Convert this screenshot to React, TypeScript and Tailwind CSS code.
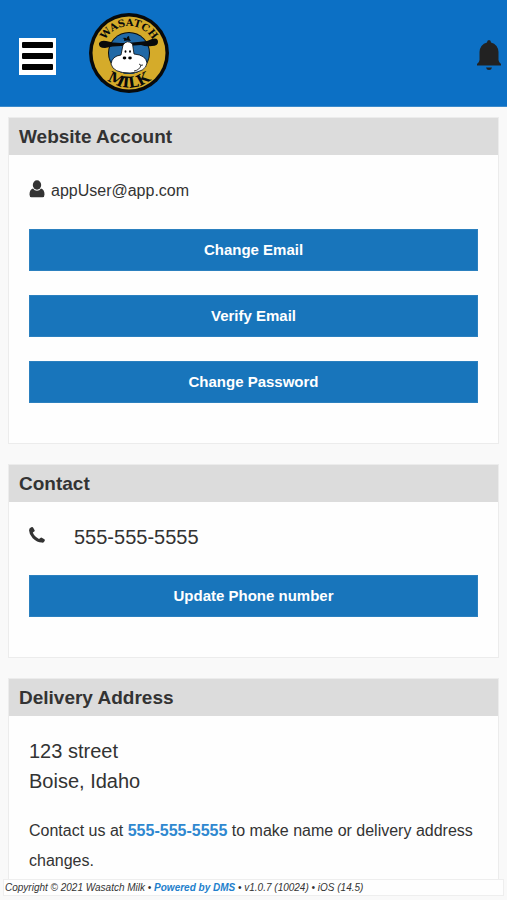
import type { ReactNode } from "react";

function Logo() {
  return (
    <svg viewBox="0 0 80 80" className="size-20" role="img" aria-label="Wasatch Milk">
      <defs>
        <path id="arc-top" d="M13 40 A27 27 0 0 1 67 40" />
        <path id="arc-bottom" d="M5.500 40 A34.500 34.500 0 0 0 74.500 40" />
      </defs>
      <circle cx="40" cy="40" r="40" fill="#080a0b" />
      <circle cx="40" cy="40" r="36.500" fill="#d5ab2a" />
      <circle cx="40" cy="40" r="21" fill="#080a0b" />
      <circle cx="40" cy="40" r="20" fill="#2169a6" />
      <path d="M20 41 A20 20 0 0 0 60 41 Q58 55 50 59 L30 59 Q22 55 20 41Z" fill="#174a75" />
      <path d="M10 30 Q12 27 17 28 L24 29.500 Q32 30 38 30 Q50 29 58 28 L63 26 Q69 24 69 29 Q69 33 63 33 Q57 34 52 32 Q41 33 32 33 Q23 33 16 35 Q9 35 10 30Z" fill="#080a0b" />
      <path d="M34 32 Q38 26 43.500 31 L45 41 Q57 42 58 50 Q57 59 41 60 Q24 60 22 51 Q23 43 32 42 Q33 37 34 32Z" fill="#fff" stroke="#080a0b" strokeWidth="0.800" />
      <path d="M35 28 Q36 26 33.500 25 Q37 24 38 26 Q37 24 40 23 Q40 26 42 28 Q38 27 35 28Z" fill="#080a0b" />
      <ellipse cx="36.500" cy="38.500" rx="0.900" ry="1.300" />
      <ellipse cx="41" cy="38.500" rx="0.900" ry="1.300" />
      <ellipse cx="35.500" cy="45" rx="1.800" ry="1.400" />
      <ellipse cx="41" cy="45" rx="1.800" ry="1.400" />
      <path d="M45 58 Q51 57 52 52 M50 51 Q52 53 54 52" fill="none" stroke="#080a0b" strokeWidth="0.800" />
      <text fontFamily="DejaVu Serif, serif" fontWeight="700" fontSize="10" fill="#080a0b" textAnchor="middle">
        <textPath href="#arc-top" startOffset="50%">WASATCH</textPath>
      </text>
      <text fontFamily="DejaVu Serif, serif" fontWeight="700" fontSize="15" fill="#080a0b" textAnchor="middle">
        <textPath href="#arc-bottom" startOffset="50%">MILK</textPath>
      </text>
    </svg>
  );
}

function UserIcon() {
  return (
    <svg viewBox="0 0 16 18" className="mb-1 h-[18px] w-4" fill="currentColor" aria-hidden="true">
      <ellipse cx="8" cy="5" rx="4.200" ry="4.700" />
      <path d="M4 8.500Q5.500 10.800 8 10.800T12 8.500Q15.500 9.300 15.500 14.500Q15.500 17.200 13.500 17.200H2.500Q.5 17.200.5 14.500Q.5 9.300 4 8.500Z" />
    </svg>
  );
}

function PhoneIcon() {
  return (
    <svg viewBox="0 0 16 16" className="mb-1 size-4" fill="currentColor" aria-hidden="true">
      <path d="M2.300.2Q3.500-.4 4.200.7L5.500 3Q6 4 5.200 4.600L3.800 5.600Q5 9.300 10 12L11.400 10.900Q12 10.300 12.800 10.800L15.400 12.300Q16.200 12.900 15.700 13.800L15 14.900Q14.300 15.800 12.800 15.600Q8 15.400 3.700 11.200Q-.2 7 .1 3Q.2 1 2.300.2Z" />
    </svg>
  );
}

function BellIcon() {
  return (
    <svg viewBox="0 0 24 31" className="h-[31px] w-6" fill="currentColor" aria-hidden="true">
      <path d="M10 2.500Q10 0 12 0T14 2.500Q21 4.500 21.500 12V20Q21.500 22 24 24V25.500H0V24Q2.500 22 2.500 20V12Q3 4.500 10 2.500ZM9 27.500H15Q14.500 30 12 30T9 27.500Z" />
    </svg>
  );
}

function Card({ title, children }: { title: string; children: ReactNode }) {
  return (
    <section className="border border-[#ececec] bg-[#fefefe]">
      <h2 className="bg-[#dcdcdc] px-2.5 py-1 text-[19px] leading-[29px] font-bold">{title}</h2>
      <div className="px-5 pb-10">{children}</div>
    </section>
  );
}

function ActionButton({ children }: { children: ReactNode }) {
  return (
    <button type="button" className="block h-[42px] w-full cursor-pointer border border-[#2b80bf] bg-[#1875bb] text-[15px] font-bold text-white">
      {children}
    </button>
  );
}

export default function App() {
  return (
    <div className="flex h-screen flex-col bg-[#f9f9f9] font-['Liberation_Sans',Arial,sans-serif] text-[#333]">
      <header className="flex h-[107px] shrink-0 items-center border-b border-[#3b8acb] bg-[#0c70c5] pr-1.5 pl-[19px]">
        <button type="button" aria-label="Menu" className="mt-1.5 flex h-[37px] w-[37px] cursor-pointer flex-col items-center justify-center gap-[5px] bg-white">
          <span className="h-[6px] w-[31px] rounded-[1px] bg-black" />
          <span className="h-[6px] w-[31px] rounded-[1px] bg-black" />
          <span className="h-[6px] w-[31px] rounded-[1px] bg-black" />
        </button>
        <div className="ml-[33px]"><Logo /></div>
        <button type="button" aria-label="Notifications" className="mt-1 ml-auto cursor-pointer text-[#222]">
          <BellIcon />
        </button>
      </header>

      <main className="flex min-h-0 flex-1 flex-col gap-5 overflow-y-auto px-2 pt-2.5 [scrollbar-width:none] *:shrink-0">
        <Card title="Website Account">
          <p className="flex items-center gap-1.5 pt-6 pb-[26px] text-[16px] leading-6">
            <UserIcon />
            <span>appUser@app.com</span>
          </p>
          <div className="flex flex-col gap-6">
            <ActionButton>Change Email</ActionButton>
            <ActionButton>Verify Email</ActionButton>
            <ActionButton>Change Password</ActionButton>
          </div>
        </Card>

        <Card title="Contact">
          <p className="flex items-center gap-[29px] pt-5 pb-[23px] text-[20px] leading-[30px]">
            <PhoneIcon />
            <span>555-555-5555</span>
          </p>
          <ActionButton>Update Phone number</ActionButton>
        </Card>

        <Card title="Delivery Address">
          <address className="pt-5 text-[20px] leading-[30px] not-italic">
            123 street
            <br />
            Boise, Idaho
          </address>
          <p className="pt-5 text-[16px] leading-[30px]">
            Contact us at <a href="tel:555-555-5555" className="font-bold text-[#2f88d0]">555-555-5555</a> to make name or delivery address changes.
          </p>
        </Card>
      </main>

      <footer className="mx-[3px] mb-1 h-[17px] shrink-0 border border-[#eee] bg-[#fefefe] px-px text-[10px] leading-[15px] italic">
        Copyright © 2021 Wasatch Milk • <a href="#dms" className="font-bold text-[#2380cc]">Powered by DMS</a> • v1.0.7 (10024) • iOS (14.5)
      </footer>
    </div>
  );
}
